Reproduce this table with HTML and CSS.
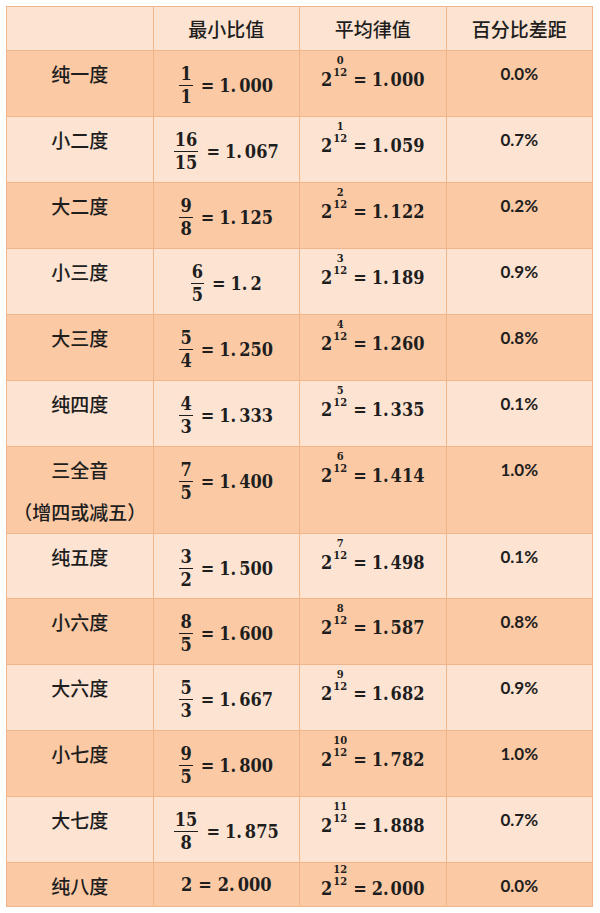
FILE: index.html
```html
<!DOCTYPE html>
<html lang="zh-CN">
<head>
<meta charset="utf-8">
<title>音程比值</title>
<link rel="stylesheet" href="styles.css">
</head>
<body>
<table class="iv">
  <thead>
    <tr class="hd">
      <th class="col"></th>
      <th class="col">最小比值</th>
      <th class="col">平均律值</th>
      <th class="col">百分比差距</th>
    </tr>
  </thead>
  <tbody>
    <tr class="dk r66">
      <td><div class="nm">纯一度</div></td>
      <td><div class="eq"><span class="fr"><span class="n">1</span><span class="d">1</span></span><span class="op">=</span><span class="v">1.<span class="dg">000</span></span></div></td>
      <td><div class="pw"><span class="b">2</span><span class="sf"><span class="sn">0</span><span class="sd">12</span></span><span class="op">=</span><span class="v">1.<span class="dg">000</span></span></div></td>
      <td><div class="pc">0.0%</div></td>
    </tr>
    <tr class="lt r66">
      <td><div class="nm">小二度</div></td>
      <td><div class="eq"><span class="fr"><span class="n">16</span><span class="d">15</span></span><span class="op">=</span><span class="v">1.<span class="dg">067</span></span></div></td>
      <td><div class="pw"><span class="b">2</span><span class="sf"><span class="sn">1</span><span class="sd">12</span></span><span class="op">=</span><span class="v">1.<span class="dg">059</span></span></div></td>
      <td><div class="pc">0.7%</div></td>
    </tr>
    <tr class="dk r66">
      <td><div class="nm">大二度</div></td>
      <td><div class="eq"><span class="fr"><span class="n">9</span><span class="d">8</span></span><span class="op">=</span><span class="v">1.<span class="dg">125</span></span></div></td>
      <td><div class="pw"><span class="b">2</span><span class="sf"><span class="sn">2</span><span class="sd">12</span></span><span class="op">=</span><span class="v">1.<span class="dg">122</span></span></div></td>
      <td><div class="pc">0.2%</div></td>
    </tr>
    <tr class="lt r66">
      <td><div class="nm">小三度</div></td>
      <td><div class="eq"><span class="fr"><span class="n">6</span><span class="d">5</span></span><span class="op">=</span><span class="v">1.<span class="dg">2</span></span></div></td>
      <td><div class="pw"><span class="b">2</span><span class="sf"><span class="sn">3</span><span class="sd">12</span></span><span class="op">=</span><span class="v">1.<span class="dg">189</span></span></div></td>
      <td><div class="pc">0.9%</div></td>
    </tr>
    <tr class="dk r66">
      <td><div class="nm">大三度</div></td>
      <td><div class="eq"><span class="fr"><span class="n">5</span><span class="d">4</span></span><span class="op">=</span><span class="v">1.<span class="dg">250</span></span></div></td>
      <td><div class="pw"><span class="b">2</span><span class="sf"><span class="sn">4</span><span class="sd">12</span></span><span class="op">=</span><span class="v">1.<span class="dg">260</span></span></div></td>
      <td><div class="pc">0.8%</div></td>
    </tr>
    <tr class="lt r66">
      <td><div class="nm">纯四度</div></td>
      <td><div class="eq"><span class="fr"><span class="n">4</span><span class="d">3</span></span><span class="op">=</span><span class="v">1.<span class="dg">333</span></span></div></td>
      <td><div class="pw"><span class="b">2</span><span class="sf"><span class="sn">5</span><span class="sd">12</span></span><span class="op">=</span><span class="v">1.<span class="dg">335</span></span></div></td>
      <td><div class="pc">0.1%</div></td>
    </tr>
    <tr class="dk r87">
      <td><div class="nm">三全音</div><div class="nm nm2">（增四或减五）</div></td>
      <td><div class="eq"><span class="fr"><span class="n">7</span><span class="d">5</span></span><span class="op">=</span><span class="v">1.<span class="dg">400</span></span></div></td>
      <td><div class="pw"><span class="b">2</span><span class="sf"><span class="sn">6</span><span class="sd">12</span></span><span class="op">=</span><span class="v">1.<span class="dg">414</span></span></div></td>
      <td><div class="pc">1.0%</div></td>
    </tr>
    <tr class="lt r65">
      <td><div class="nm">纯五度</div></td>
      <td><div class="eq"><span class="fr"><span class="n">3</span><span class="d">2</span></span><span class="op">=</span><span class="v">1.<span class="dg">500</span></span></div></td>
      <td><div class="pw"><span class="b">2</span><span class="sf"><span class="sn">7</span><span class="sd">12</span></span><span class="op">=</span><span class="v">1.<span class="dg">498</span></span></div></td>
      <td><div class="pc">0.1%</div></td>
    </tr>
    <tr class="dk r66">
      <td><div class="nm">小六度</div></td>
      <td><div class="eq"><span class="fr"><span class="n">8</span><span class="d">5</span></span><span class="op">=</span><span class="v">1.<span class="dg">600</span></span></div></td>
      <td><div class="pw"><span class="b">2</span><span class="sf"><span class="sn">8</span><span class="sd">12</span></span><span class="op">=</span><span class="v">1.<span class="dg">587</span></span></div></td>
      <td><div class="pc">0.8%</div></td>
    </tr>
    <tr class="lt r66">
      <td><div class="nm">大六度</div></td>
      <td><div class="eq"><span class="fr"><span class="n">5</span><span class="d">3</span></span><span class="op">=</span><span class="v">1.<span class="dg">667</span></span></div></td>
      <td><div class="pw"><span class="b">2</span><span class="sf"><span class="sn">9</span><span class="sd">12</span></span><span class="op">=</span><span class="v">1.<span class="dg">682</span></span></div></td>
      <td><div class="pc">0.9%</div></td>
    </tr>
    <tr class="dk r66">
      <td><div class="nm">小七度</div></td>
      <td><div class="eq"><span class="fr"><span class="n">9</span><span class="d">5</span></span><span class="op">=</span><span class="v">1.<span class="dg">800</span></span></div></td>
      <td><div class="pw"><span class="b">2</span><span class="sf"><span class="sn">10</span><span class="sd">12</span></span><span class="op">=</span><span class="v">1.<span class="dg">782</span></span></div></td>
      <td><div class="pc">1.0%</div></td>
    </tr>
    <tr class="lt r66">
      <td><div class="nm">大七度</div></td>
      <td><div class="eq"><span class="fr"><span class="n">15</span><span class="d">8</span></span><span class="op">=</span><span class="v">1.<span class="dg">875</span></span></div></td>
      <td><div class="pw"><span class="b">2</span><span class="sf"><span class="sn">11</span><span class="sd">12</span></span><span class="op">=</span><span class="v">1.<span class="dg">888</span></span></div></td>
      <td><div class="pc">0.7%</div></td>
    </tr>
    <tr class="dk r44 last">
      <td><div class="nm">纯八度</div></td>
      <td><div class="eq eq1"><span class="v">2</span><span class="op">=</span><span class="v">2.<span class="dg">000</span></span></div></td>
      <td><div class="pw"><span class="b">2</span><span class="sf"><span class="sn">12</span><span class="sd">12</span></span><span class="op">=</span><span class="v">2.<span class="dg">000</span></span></div></td>
      <td><div class="pc">0.0%</div></td>
    </tr>
  </tbody>
</table>
</body>
</html>
```
FILE: styles.css
```css
html, body {
  margin: 0;
  padding: 0;
  background: #ffffff;
}

body {
  font-family: "Noto Sans CJK SC", "Noto Sans", sans-serif;
  color: #1e1e1e;
}

.iv {
  margin: 6px 0 0 6px;
  width: 587px;
  border-collapse: collapse;
  table-layout: fixed;
  border: 1px solid #f3bc95;
}

.col { width: 25%; }

.iv th,
.iv td {
  padding: 0;
  border: 1px solid #f1b58c;
  vertical-align: top;
  text-align: center;
}

.hd th {
  height: 43px;
  vertical-align: middle;
  font-weight: 500;
  font-size: 19px;
  line-height: 24px;
  background: #fde4d2;
}

.lt td { background: #fde4d2; }
.dk td { background: #fbcaa5; }

.r66 td { height: 65px; }
.r65 td { height: 64px; }
.r87 td { height: 86px; }
.r44 td { height: 43px; }

.nm {
  font-size: 19px;
  font-weight: 500;
  line-height: 24px;
  padding-top: 11px;
}

.nm2 {
  padding-top: 18px;
}

.eq {
  display: flex;
  justify-content: center;
  align-items: center;
  padding-top: 13px;
  font-family: "DejaVu Serif", "Liberation Serif", serif;
  font-stretch: condensed;
  font-weight: 700;
  font-size: 18px;
}

.eq1 {
  padding-top: 11px;
}

.fr {
  display: flex;
  flex-direction: column;
  align-items: center;
  margin-right: 3px;
}

.fr .n,
.fr .d {
  line-height: 20px;
  padding: 0 1px;
}

.fr .n {
  border-bottom: 1.6px solid #1e1e1e;
  padding-bottom: 1px;
}

.fr .d {
  padding-top: 1px;
}

.v {
  line-height: 22px;
}

.dg {
  margin-left: 3px;
}

.op {
  line-height: 22px;
  margin: 0 5px;
}

.eq1 .op {
  margin: 0 6px;
}

.pw {
  display: flex;
  justify-content: center;
  align-items: flex-end;
  padding-top: 4px;
  font-family: "DejaVu Serif", "Liberation Serif", serif;
  font-stretch: condensed;
  font-weight: 700;
  font-size: 18px;
}

.pw .b {
  line-height: 22px;
}

.sf {
  display: flex;
  flex-direction: column;
  align-items: center;
  font-size: 11px;
  margin: 0 2px 12px 1px;
}

.sf .sn,
.sf .sd {
  line-height: 12px;
}

.pw .op {
  margin: 0 5px 0 4px;
}

.pw .dg {
  margin-left: 2px;
}

.last .pw {
  padding-top: 1px;
}

.pc {
  font-family: "Lato", "Liberation Sans", sans-serif;
  font-weight: 700;
  font-size: 17px;
  line-height: 24px;
  padding-top: 11px;
}
```
